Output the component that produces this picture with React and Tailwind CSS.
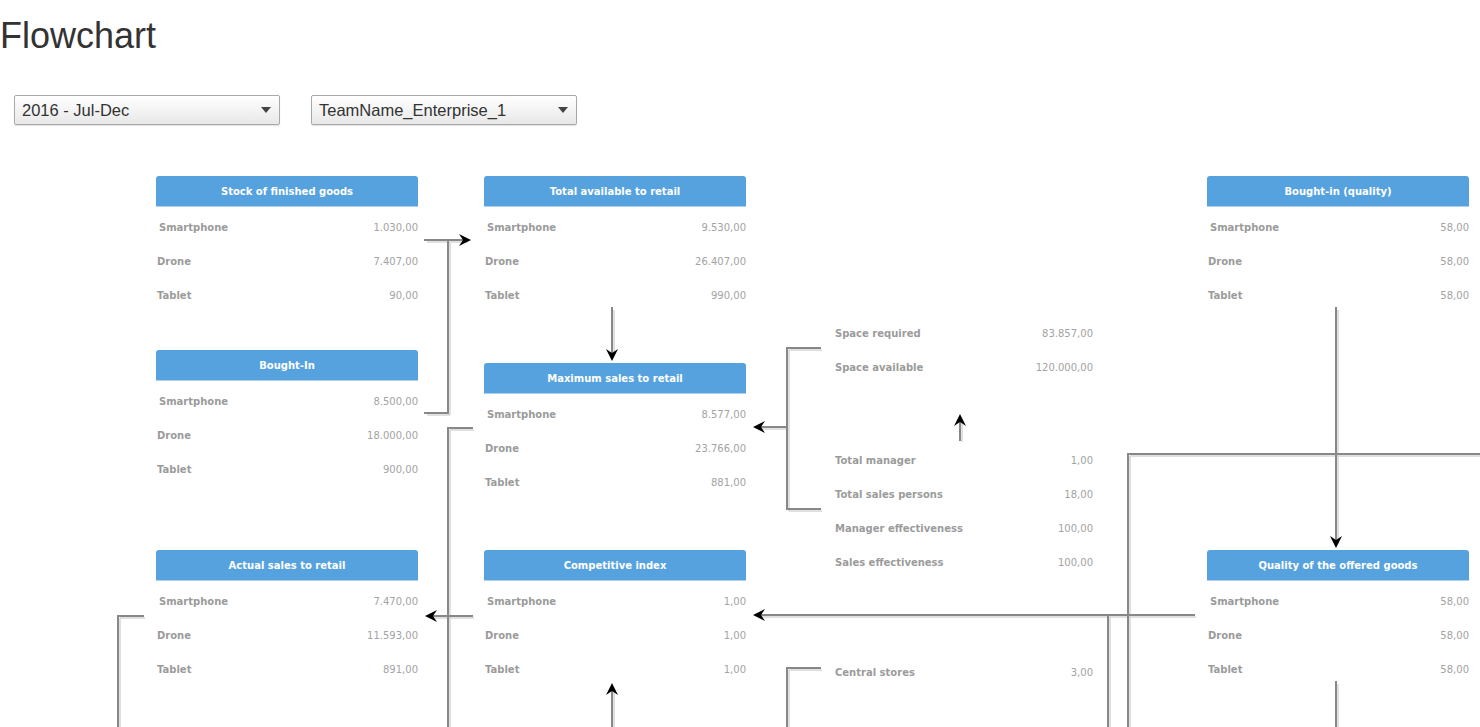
import { useState } from "react";

const CANVAS_TOP = 140;

const nodes = [
  { title: "Stock of finished goods", x: 156, y: 176, rows: [["Smartphone", "1.030,00"], ["Drone", "7.407,00"], ["Tablet", "90,00"]] },
  { title: "Total available to retail", x: 484, y: 176, rows: [["Smartphone", "9.530,00"], ["Drone", "26.407,00"], ["Tablet", "990,00"]] },
  { title: "Bought-in (quality)", x: 1207, y: 176, rows: [["Smartphone", "58,00"], ["Drone", "58,00"], ["Tablet", "58,00"]] },
  { title: "Bought-In", x: 156, y: 350, rows: [["Smartphone", "8.500,00"], ["Drone", "18.000,00"], ["Tablet", "900,00"]] },
  { title: "Maximum sales to retail", x: 484, y: 363, rows: [["Smartphone", "8.577,00"], ["Drone", "23.766,00"], ["Tablet", "881,00"]] },
  { title: "Actual sales to retail", x: 156, y: 550, rows: [["Smartphone", "7.470,00"], ["Drone", "11.593,00"], ["Tablet", "891,00"]] },
  { title: "Competitive index", x: 484, y: 550, rows: [["Smartphone", "1,00"], ["Drone", "1,00"], ["Tablet", "1,00"]] },
  { title: "Quality of the offered goods", x: 1207, y: 550, rows: [["Smartphone", "58,00"], ["Drone", "58,00"], ["Tablet", "58,00"]] },
];

// loose key figures without a header
const groups = [
  { x: 834, y: 316, rows: [["Space required", "83.857,00"], ["Space available", "120.000,00"]] },
  { x: 834, y: 443, rows: [["Total manager", "1,00"], ["Total sales persons", "18,00"], ["Manager effectiveness", "100,00"], ["Sales effectiveness", "100,00"]] },
  { x: 834, y: 655, rows: [["Central stores", "3,00"]] },
];

// connector segments, page coordinates
const lines = [
  [425, 240, 466, 240], [448, 240, 448, 413], [425, 413, 448, 413],
  [448, 428, 472, 428], [448, 428, 448, 740], [430, 616, 472, 616],
  [118, 616, 143, 616], [118, 616, 118, 740],
  [612, 308, 612, 355],
  [787, 348, 787, 509], [787, 348, 820, 348], [787, 509, 820, 509], [758, 427, 787, 427],
  [960, 420, 960, 440],
  [1128, 454, 1128, 740], [1128, 454, 1480, 454],
  [1336, 308, 1336, 542],
  [758, 615, 1194, 615], [1108, 615, 1108, 740], [1336, 682, 1336, 740],
  [612, 689, 612, 740],
  [787, 668, 787, 740], [787, 668, 820, 668],
];

// arrow tips: x, y, direction
const arrows = [
  [471, 240, "right"], [425, 616, "left"], [612, 361, "down"], [753, 427, "left"],
  [960, 414, "up"], [1336, 548, "down"], [753, 615, "left"], [612, 683, "up"],
];

const rot = { right: 0, down: 90, left: 180, up: 270 };

function Dropdown({ value }) {
  return (
    <div className="h-[30px] w-[266px] border border-[#a9a9a9] rounded-[2px] bg-gradient-to-b from-white to-[#e8e8e8] shadow-[0_1px_1px_rgba(0,0,0,0.12)] flex items-center justify-between pl-[7px] pr-[8px]">
      <span className="text-[16.5px] text-[#333] font-['Liberation_Sans',sans-serif] leading-none">{value}</span>
      <span className="w-0 h-0 border-l-[5px] border-r-[5px] border-t-[6px] border-l-transparent border-r-transparent border-t-[#444]" />
    </div>
  );
}

function Row({ label, value, first }) {
  return (
    <div className="h-[34px] flex items-center justify-between">
      <span className={`font-bold text-[#9b9b9b] ${first ? "pl-[3px]" : "pl-px"}`}>{label}</span>
      <span className="text-[#a3a3a3]">{value}</span>
    </div>
  );
}

export default function App() {
  const [period] = useState("2016 - Jul-Dec");
  const [team] = useState("TeamName_Enterprise_1");

  return (
    <div className="w-[1480px] h-[727px] overflow-hidden bg-white">
      <h1 className="h-[60px] pt-[16px] text-[36px] leading-[40px] text-[#333] font-['Liberation_Sans',sans-serif]">Flowchart</h1>

      <div className="mt-[35px] flex gap-[31px] pl-[14px]">
        <Dropdown value={period} />
        <Dropdown value={team} />
      </div>

      {/* diagram canvas */}
      <div className="relative mt-[15px] h-[587px] font-['DejaVu_Sans',sans-serif] text-[10px]">
        {nodes.map((n) => (
          <div key={n.title} className="absolute w-[262px]" style={{ left: n.x, top: n.y - CANVAS_TOP }}>
            <div className="h-[31px] pt-px rounded-t-[3px] bg-[#56a2de] border-b border-[#acd0ee] flex items-center justify-center text-white font-bold">
              {n.title}
            </div>
            <div className="pt-[3px]">
              {n.rows.map(([l, v], i) => <Row key={l} label={l} value={v} first={i === 0} />)}
            </div>
          </div>
        ))}

        {groups.map((g) => (
          <div key={g.y} className="absolute w-[259px]" style={{ left: g.x, top: g.y - CANVAS_TOP }}>
            {g.rows.map(([l, v]) => <Row key={l} label={l} value={v} />)}
          </div>
        ))}

        <svg className="absolute inset-0 pointer-events-none" width="1480" height="587" viewBox={`0 ${CANVAS_TOP} 1480 587`}>
          {lines.map(([x1, y1, x2, y2], i) => (
            <line key={"s" + i} x1={x1 + 2} y1={y1 + 2} x2={x2 + 2} y2={y2 + 2} stroke="#d6d6d6" strokeWidth="1.5" />
          ))}
          {lines.map(([x1, y1, x2, y2], i) => (
            <line key={"l" + i} x1={x1} y1={y1} x2={x2} y2={y2} stroke="#888" strokeWidth="2" strokeLinecap="square" />
          ))}
          {arrows.map(([x, y, d], i) => (
            <path key={"a" + i} d="M0 0 L-12 -6 L-8 0 L-12 6 Z" fill="#000" transform={`translate(${x} ${y}) rotate(${rot[d]})`} />
          ))}
        </svg>
      </div>
    </div>
  );
}
